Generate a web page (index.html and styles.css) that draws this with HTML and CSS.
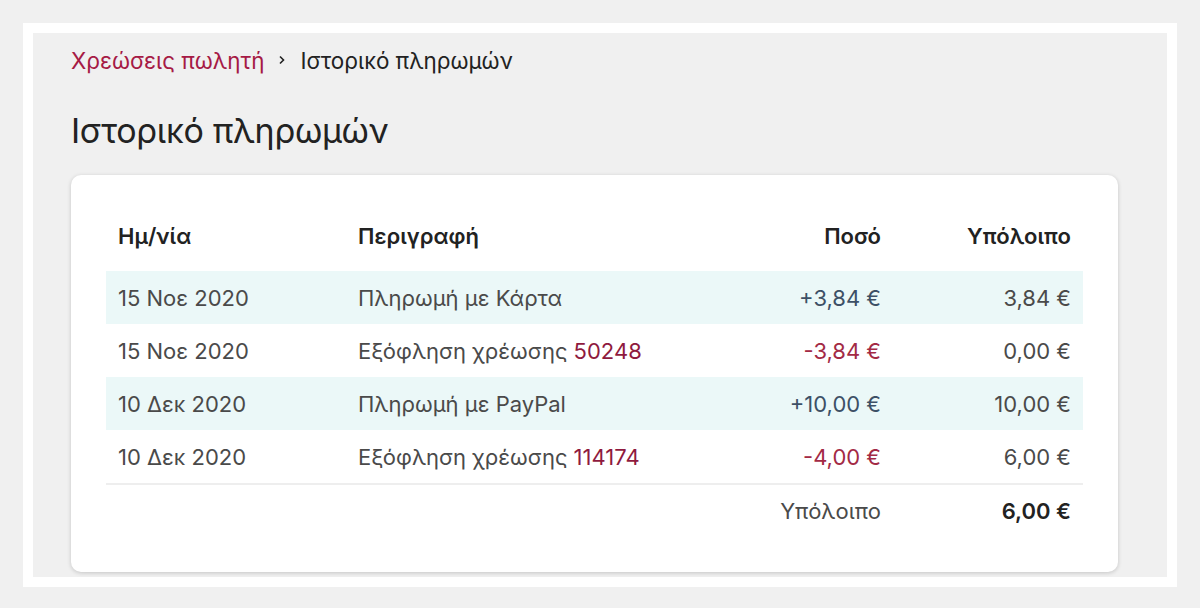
FILE: index.html
```html
<!DOCTYPE html>
<html lang="el">
<head>
<meta charset="utf-8">
<link rel="stylesheet" href="styles.css">
</head>
<body>
<div class="frame">
  <main class="page">
    <nav class="crumbs">
      <a class="crumb-link" href="#">Χρεώσεις πωλητή</a>
      <svg class="chev" width="10" height="12" viewBox="0 0 10 12"><path d="M3 2.5 L6.5 6 L3 9.5" fill="none" stroke="#222" stroke-width="1.6"/></svg>
      <span class="crumb-current">Ιστορικό πληρωμών</span>
    </nav>
    <h1 class="title">Ιστορικό πληρωμών</h1>
    <section class="card">
      <table class="ledger">
        <thead>
          <tr>
            <th class="c-date">Ημ/νία</th>
            <th class="c-desc">Περιγραφή</th>
            <th class="c-amt">Ποσό</th>
            <th class="c-bal">Υπόλοιπο</th>
          </tr>
        </thead>
        <tbody>
          <tr class="tint">
            <td>15 Νοε 2020</td>
            <td>Πληρωμή με Κάρτα</td>
            <td class="num pos">+3,84 €</td>
            <td class="num">3,84 €</td>
          </tr>
          <tr>
            <td>15 Νοε 2020</td>
            <td>Εξόφληση χρέωσης <a class="ref" href="#">50248</a></td>
            <td class="num neg">-3,84 €</td>
            <td class="num">0,00 €</td>
          </tr>
          <tr class="tint">
            <td>10 Δεκ 2020</td>
            <td>Πληρωμή με PayPal</td>
            <td class="num pos">+10,00 €</td>
            <td class="num">10,00 €</td>
          </tr>
          <tr class="last">
            <td>10 Δεκ 2020</td>
            <td>Εξόφληση χρέωσης <a class="ref" href="#">114174</a></td>
            <td class="num neg">-4,00 €</td>
            <td class="num">6,00 €</td>
          </tr>
        </tbody>
        <tfoot>
          <tr>
            <td></td>
            <td></td>
            <td class="num foot-label">Υπόλοιπο</td>
            <td class="num foot-total">6,00 €</td>
          </tr>
        </tfoot>
      </table>
    </section>
  </main>
</div>
</body>
</html>
```
FILE: styles.css
```css
html, body {
  margin: 0;
  padding: 0;
  background: #f0f0f0;
}
body {
  font-family: Inter, "Noto Sans", sans-serif;
  color: #222;
  padding: 23px;
}
.frame {
  background: #fff;
  padding: 10px;
  height: 544px;
}
.page {
  background: #f0f0f0;
  height: 544px;
  padding: 0 49px 0 38px;
  box-sizing: border-box;
}
.crumbs {
  display: flex;
  align-items: center;
  gap: 13px;
  padding-top: 13px;
  height: 28px;
  font-size: 22.4px;
}
.crumb-link {
  color: #a61a45;
  text-decoration: none;
}
.crumb-current {
  color: #222;
}
.title {
  margin: 37px 0 0;
  font-size: 34px;
  letter-spacing: -0.3px;
  font-weight: 400;
  line-height: 40px;
  color: #222;
}
.card {
  margin-top: 24px;
  background: #fff;
  border-radius: 10px;
  box-shadow: 0 1px 4px rgba(0,0,0,0.18);
  padding: 35px 35px 36px;
}
.ledger {
  width: 100%;
  border-collapse: collapse;
  font-size: 22px;
}
.ledger th {
  font-weight: 600;
  color: #222;
  text-align: left;
  padding: 0 12px 10px;
  height: 51px;
  vertical-align: middle;
}
.ledger th.c-amt, .ledger th.c-bal {
  text-align: right;
}
.ledger td {
  height: 53px;
  padding: 0 12px;
  color: #4a4a4a;
  vertical-align: middle;
}
.c-date { width: 216px; }
.c-bal { width: 166px; }
.tint td { background: #ebf8f8; }
.last td { border-bottom: 2px solid #eeeeee; }
.num { text-align: right; }
.pos { color: #3d5066 !important; }
.neg { color: #a32a45 !important; }
.ref {
  color: #8f1a3e;
  text-decoration: none;
}
.ledger tfoot td { height: 51px; padding-bottom: 0; }
.foot-label { color: #4a4a4a; }
.foot-total {
  font-weight: 600;
  color: #222 !important;
}
```
